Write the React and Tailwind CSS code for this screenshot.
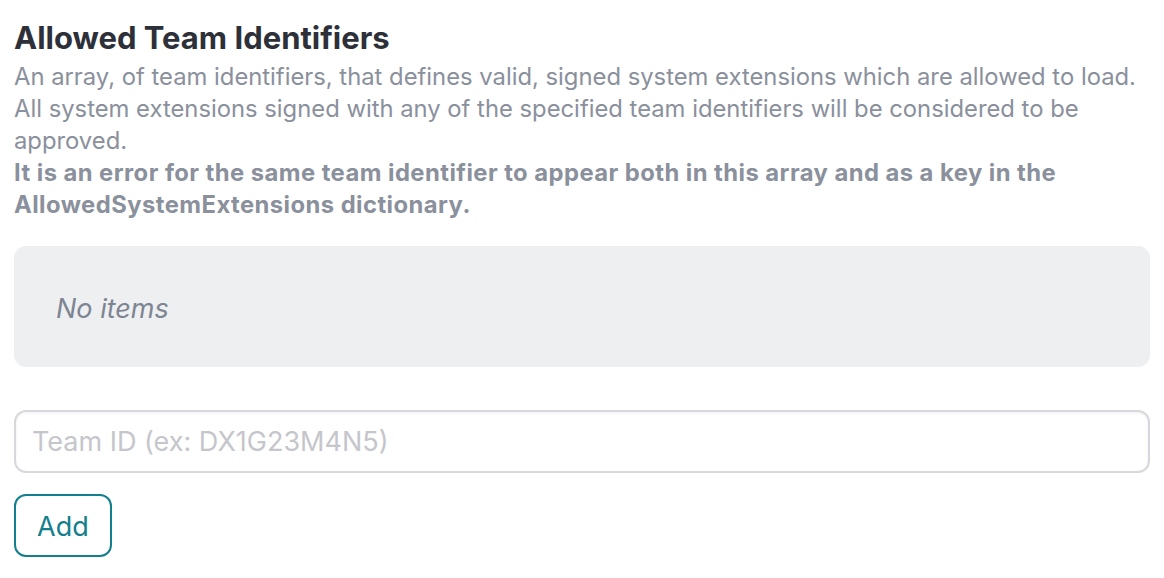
export default function App() {
  return (
    <div className="min-h-screen bg-white px-[14px] pt-[18px] font-['Inter',sans-serif]">
      <h2 className="text-[31px] font-bold leading-[40px] text-[#2d3038]">Allowed Team Identifiers</h2>
      <div className="mt-[3px] text-[23.8px] leading-[32px] text-[#8a909c]">
        <p>
          An array, of team identifiers, that defines valid, signed system extensions which are allowed to load.
          All system extensions signed with any of the specified team identifiers will be considered to be
          approved.
        </p>
        <p className="font-bold tracking-[0.45px]">
          It is an error for the same team identifier to appear both in this array and as a key in the
          AllowedSystemExtensions dictionary.
        </p>
      </div>
      <div className="mt-[25px] flex h-[121px] items-center rounded-[12px] bg-[#eeeff1] px-[42px]">
        <span className="mt-[5px] text-[27px] italic text-[#7d8593]">No items</span>
      </div>
      <input
        className="mt-[43px] block h-[63px] w-full rounded-[12px] border-2 border-[#d8d7dc] px-[16px] text-[27px] text-[#2c2e35] shadow-[inset_0_1px_3px_rgba(0,0,0,0.06)] outline-none placeholder:text-[#c5c6cb]"
        placeholder="Team ID (ex: DX1G23M4N5)"
      />
      <button className="mt-[21px] h-[63px] rounded-[12px] border-2 border-[#137f8d] px-[21px] pt-[3px] text-[27px] text-[#137f8d]">
        Add
      </button>
    </div>
  );
}
